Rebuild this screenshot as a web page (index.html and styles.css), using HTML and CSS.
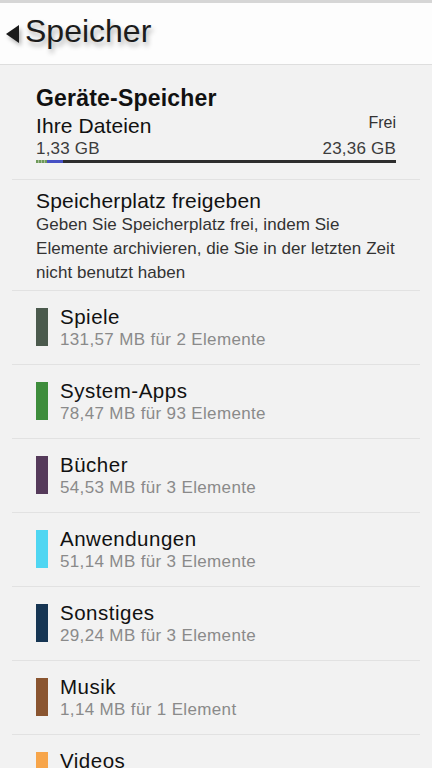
FILE: index.html
```html
<!DOCTYPE html>
<html lang="de">
<head>
<meta charset="utf-8">
<title>Speicher</title>
<link rel="stylesheet" href="styles.css">
</head>
<body>
<header class="topbar">
  <svg class="back" width="14" height="18" viewBox="0 0 14 18"><polygon points="13,0 13,18 0,9" fill="#1a1a1a"/></svg>
  <h1 class="title">Speicher</h1>
</header>
<main class="list">
  <section class="device">
    <div class="device-title">Geräte-Speicher</div>
    <div class="line1"><span class="files">Ihre Dateien</span><span class="free">Frei</span></div>
    <div class="line2"><span>1,33 GB</span><span>23,36 GB</span></div>
    <div class="bar"><span class="seg seg-green"></span><span class="seg seg-blue"></span></div>
  </section>
  <section class="cleanup">
    <div class="cleanup-title">Speicherplatz freigeben</div>
    <p class="cleanup-text">Geben Sie Speicherplatz frei, indem Sie Elemente archivieren, die Sie in der letzten Zeit nicht benutzt haben</p>
  </section>
  <div class="row"><span class="swatch c-spiele"></span><div class="info"><div class="name">Spiele</div><div class="meta">131,57 MB für 2 Elemente</div></div></div>
  <div class="row"><span class="swatch c-system"></span><div class="info"><div class="name">System-Apps</div><div class="meta">78,47 MB für 93 Elemente</div></div></div>
  <div class="row"><span class="swatch c-buecher"></span><div class="info"><div class="name">Bücher</div><div class="meta">54,53 MB für 3 Elemente</div></div></div>
  <div class="row"><span class="swatch c-anw"></span><div class="info"><div class="name">Anwendungen</div><div class="meta">51,14 MB für 3 Elemente</div></div></div>
  <div class="row"><span class="swatch c-sonst"></span><div class="info"><div class="name">Sonstiges</div><div class="meta">29,24 MB für 3 Elemente</div></div></div>
  <div class="row"><span class="swatch c-musik"></span><div class="info"><div class="name">Musik</div><div class="meta">1,14 MB für 1 Element</div></div></div>
  <div class="row row-last"><span class="swatch c-videos"></span><div class="info"><div class="name">Videos</div></div></div>
</main>
</body>
</html>
```
FILE: styles.css
```css
html, body {
  margin: 0;
  padding: 0;
}
body {
  width: 432px;
  height: 768px;
  overflow: hidden;
  background: #f2f2f2;
  font-family: "Liberation Sans", Arial, Helvetica, sans-serif;
  color: #1a1a1a;
}
.topbar {
  display: flex;
  align-items: center;
  height: 61px;
  padding: 0 0 0 6px;
  background: #fdfdfd;
  border-top: 3px solid #d6d6d6;
  border-bottom: 1px solid #dedede;
  box-sizing: content-box;
}
.back {
  display: block;
  margin-top: 1px;
  filter: drop-shadow(2px 3px 2px rgba(0,0,0,0.3));
}
.title {
  margin: 0 0 0 5px;
  padding-bottom: 5px;
  font-size: 32px;
  font-weight: normal;
  line-height: 40px;
  color: #1c1c1c;
  text-shadow: 2px 4px 5px rgba(0,0,0,0.3);
}
.list {
  margin: 0 12px;
}
.device {
  padding: 19px 24px 16px;
}
.device-title {
  font-size: 23px;
  font-weight: bold;
  line-height: 28px;
  letter-spacing: 0.2px;
  color: #111;
}
.line1 {
  display: flex;
  justify-content: space-between;
  align-items: flex-start;
  margin-top: 1px;
}
.files {
  font-size: 21px;
  line-height: 26px;
  letter-spacing: 0.1px;
  color: #111;
}
.free {
  font-size: 16px;
  line-height: 20px;
  color: #333;
}
.line2 {
  display: flex;
  justify-content: space-between;
  font-size: 17px;
  line-height: 20px;
  letter-spacing: 0.2px;
  color: #3c3c3c;
}
.bar {
  display: flex;
  height: 3px;
  margin-top: 1px;
  background: #2e2e2e;
}
.seg { display: block; height: 3px; }
.seg-green {
  width: 11px;
  background: repeating-linear-gradient(90deg, #6f9a5a 0 2px, #a8c09a 2px 3px);
}
.seg-blue {
  width: 16px;
  background: #4650c4;
}
.cleanup {
  border-top: 1px solid #e2e2e2;
  padding: 8px 18px 5px 24px;
}
.cleanup-title {
  font-size: 21px;
  line-height: 25px;
  letter-spacing: 0.2px;
  color: #111;
}
.cleanup-text {
  margin: 0;
  font-size: 17px;
  line-height: 24px;
  letter-spacing: 0.05px;
  color: #333;
}
.row {
  display: flex;
  align-items: flex-start;
  gap: 12px;
  height: 73px;
  box-sizing: content-box;
  border-top: 1px solid #e2e2e2;
  padding: 0 24px;
}
.row-last {
  height: 40px;
}
.swatch {
  display: block;
  flex: 0 0 12px;
  height: 38px;
  margin-top: 17px;
}
.info {
  padding-top: 14px;
}
.name {
  font-size: 20.5px;
  line-height: 24px;
  letter-spacing: 0.5px;
  color: #111;
}
.meta {
  font-size: 17px;
  line-height: 22px;
  letter-spacing: 0.35px;
  color: #8a8a8a;
}
.c-spiele { background: #4b5a4d; }
.c-system { background: #3e8d3c; }
.c-buecher { background: #553a5a; }
.c-anw { background: #4fd6f2; }
.c-sonst { background: #163553; }
.c-musik { background: #8a5530; }
.c-videos { background: #f7a54a; }
```
